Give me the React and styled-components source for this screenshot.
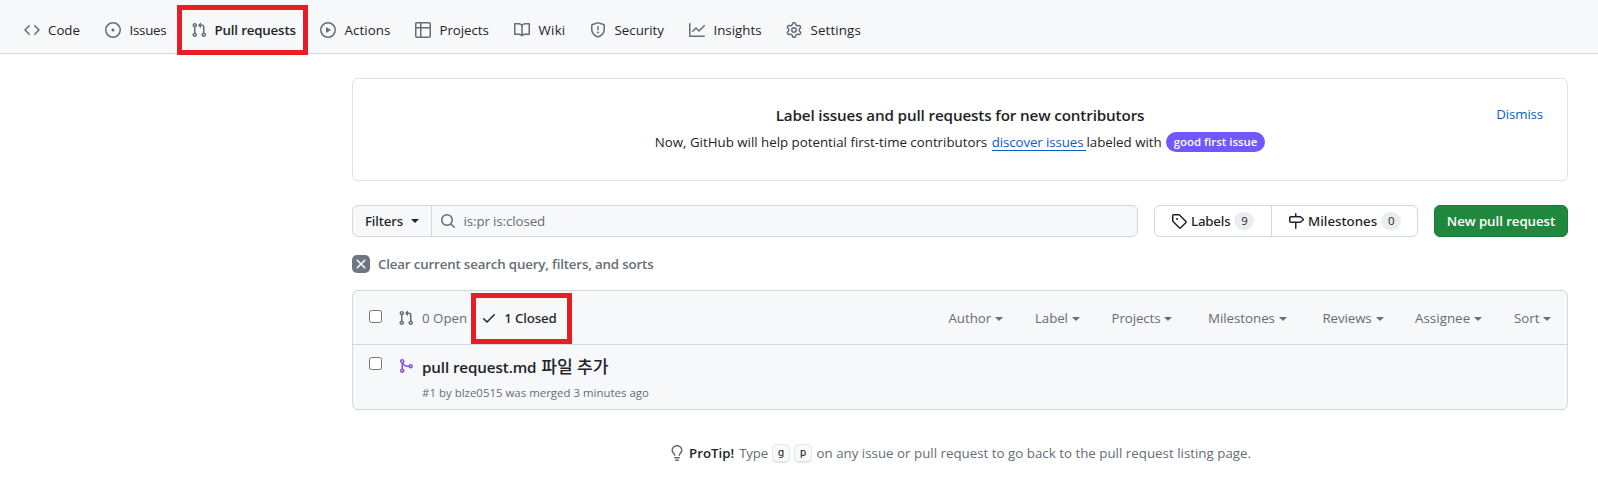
import React from "react";
import styled, { createGlobalStyle, css } from "styled-components";

const color = {
  fg: "#1f2328",
  muted: "#656d76",
  border: "#d0d7de",
  borderMuted: "#dfe4e9",
  subtle: "#f6f8fa",
  link: "#0a5fc2",
  green: "#1f883d",
  purple: "#7057ff",
  merged: "#8250df",
  mark: "#e81d25",
};

const GlobalStyle = createGlobalStyle`
  *, *::before, *::after { box-sizing: border-box; }
  body {
    margin: 0;
    background: #fff;
    color: ${color.fg};
    font-family: "Open Sans", "Noto Sans CJK KR", sans-serif;
    font-size: 13.3px;
    line-height: 20px;
    white-space: nowrap;
  }
`;

const paths = {
  code: "m11.28 3.22 4.25 4.25a.75.75 0 0 1 0 1.06l-4.25 4.25a.749.749 0 0 1-1.275-.326.749.749 0 0 1 .215-.734L13.94 8l-3.72-3.72a.749.749 0 0 1 .326-1.275.749.749 0 0 1 .734.215Zm-6.56 0a.751.751 0 0 1 1.042.018.751.751 0 0 1 .018 1.042L2.06 8l3.72 3.72a.749.749 0 0 1-.326 1.275.749.749 0 0 1-.734-.215L.47 8.53a.75.75 0 0 1 0-1.06Z",
  issue: "M8 9.5a1.5 1.5 0 1 0 0-3 1.5 1.5 0 0 0 0 3ZM8 0a8 8 0 1 1 0 16A8 8 0 0 1 8 0ZM1.5 8a6.5 6.5 0 1 0 13 0 6.5 6.5 0 0 0-13 0Z",
  pull: "M1.5 3.25a2.25 2.25 0 1 1 3 2.122v5.256a2.251 2.251 0 1 1-1.5 0V5.372A2.25 2.25 0 0 1 1.5 3.25Zm5.677-.177L9.573.677A.25.25 0 0 1 10 .854V2.5h1A2.5 2.5 0 0 1 13.5 5v5.628a2.251 2.251 0 1 1-1.5 0V5a1 1 0 0 0-1-1h-1v1.646a.25.25 0 0 1-.427.177L7.177 3.427a.25.25 0 0 1 0-.354ZM3.75 2.5a.75.75 0 1 0 0 1.5.75.75 0 0 0 0-1.5Zm0 9.5a.75.75 0 1 0 0 1.5.75.75 0 0 0 0-1.5Zm8.25.75a.75.75 0 1 0 1.5 0 .75.75 0 0 0-1.5 0Z",
  play: "M8 0a8 8 0 1 1 0 16A8 8 0 0 1 8 0ZM1.5 8a6.5 6.5 0 1 0 13 0 6.5 6.5 0 0 0-13 0Zm4.879-2.773 4.264 2.559a.25.25 0 0 1 0 .428l-4.264 2.559A.25.25 0 0 1 6 10.559V5.442a.25.25 0 0 1 .379-.215Z",
  table: "M0 1.75C0 .784.784 0 1.75 0h12.5C15.216 0 16 .784 16 1.75v12.5A1.75 1.75 0 0 1 14.25 16H1.75A1.75 1.75 0 0 1 0 14.25ZM6.5 6.5v8h7.75a.25.25 0 0 0 .25-.25V6.5Zm8-1.5V1.75a.25.25 0 0 0-.25-.25H6.5V5Zm-13 1.5v7.75c0 .138.112.25.25.25H5v-8ZM5 5V1.5H1.75a.25.25 0 0 0-.25.25V5Z",
  book: "M0 1.75A.75.75 0 0 1 .75 1h4.253c1.227 0 2.317.59 3 1.501A3.743 3.743 0 0 1 11.006 1h4.245a.75.75 0 0 1 .75.75v10.5a.75.75 0 0 1-.75.75h-4.507a2.25 2.25 0 0 0-1.591.659l-.622.621a.75.75 0 0 1-1.06 0l-.622-.621A2.25 2.25 0 0 0 5.258 13H.75a.75.75 0 0 1-.75-.75Zm7.251 10.324.004-5.073-.002-2.253A2.25 2.25 0 0 0 5.003 2.5H1.5v9h3.757a3.75 3.75 0 0 1 1.994.574ZM8.755 4.75l-.004 7.322a3.752 3.752 0 0 1 1.992-.572H14.5v-9h-3.495a2.25 2.25 0 0 0-2.25 2.25Z",
  shield: "M7.467.133a1.748 1.748 0 0 1 1.066 0l5.25 1.68A1.75 1.75 0 0 1 15 3.48V7c0 1.566-.32 3.182-1.303 4.682-.983 1.498-2.585 2.813-5.032 3.855a1.697 1.697 0 0 1-1.33 0c-2.447-1.042-4.049-2.357-5.032-3.855C1.32 10.182 1 8.566 1 7V3.48a1.75 1.75 0 0 1 1.217-1.667Zm.61 1.429a.25.25 0 0 0-.153 0l-5.25 1.68a.25.25 0 0 0-.174.238V7c0 1.358.275 2.666 1.057 3.86.784 1.194 2.121 2.34 4.366 3.297a.196.196 0 0 0 .154 0c2.245-.956 3.582-2.104 4.366-3.298C13.225 9.666 13.5 8.36 13.5 7V3.48a.251.251 0 0 0-.174-.237l-5.25-1.68ZM8.75 4.75v3a.75.75 0 0 1-1.5 0v-3a.75.75 0 0 1 1.5 0ZM9 10.5a1 1 0 1 1-2 0 1 1 0 0 1 2 0Z",
  graph: "M1.5 1.75V13.5h13.75a.75.75 0 0 1 0 1.5H.75a.75.75 0 0 1-.75-.75V1.75a.75.75 0 0 1 1.5 0Zm14.28 2.53-5.25 5.25a.75.75 0 0 1-1.06 0L7 7.06 4.28 9.78a.751.751 0 0 1-1.042-.018.751.751 0 0 1-.018-1.042l3.25-3.25a.75.75 0 0 1 1.06 0L10 7.94l4.72-4.72a.751.751 0 0 1 1.042.018.751.751 0 0 1 .018 1.042Z",
  gear: "M8 0a8.2 8.2 0 0 1 .701.031C9.444.095 9.99.645 10.16 1.29l.288 1.107c.018.066.079.158.212.224.231.114.454.243.668.386.123.082.233.09.299.071l1.103-.303c.644-.176 1.392.021 1.82.63.27.385.506.792.704 1.218.315.675.111 1.422-.364 1.891l-.814.806c-.049.048-.098.147-.088.294.016.257.016.515 0 .772-.01.147.038.246.088.294l.814.806c.475.469.679 1.216.364 1.891a7.977 7.977 0 0 1-.704 1.217c-.428.61-1.176.807-1.82.63l-1.102-.302c-.067-.019-.177-.011-.3.071a5.909 5.909 0 0 1-.668.386c-.133.066-.194.158-.211.224l-.29 1.106c-.168.646-.715 1.196-1.458 1.26a8.006 8.006 0 0 1-1.402 0c-.743-.064-1.289-.614-1.458-1.26l-.289-1.106c-.018-.066-.079-.158-.212-.224a5.738 5.738 0 0 1-.668-.386c-.123-.082-.233-.09-.299-.071l-1.103.303c-.644.176-1.392-.021-1.82-.63a8.12 8.12 0 0 1-.704-1.218c-.315-.675-.111-1.422.363-1.891l.815-.806c.05-.048.098-.147.088-.294a6.214 6.214 0 0 1 0-.772c.01-.147-.038-.246-.088-.294l-.815-.806C.635 6.045.431 5.298.746 4.623a7.92 7.92 0 0 1 .704-1.217c.428-.61 1.176-.807 1.82-.63l1.102.302c.067.019.177.011.3-.071.214-.143.437-.272.668-.386.133-.066.194-.158.211-.224l.29-1.106C6.009.645 6.556.095 7.299.03 7.53.01 7.764 0 8 0Zm-.571 1.525c-.036.003-.108.036-.137.146l-.289 1.105c-.147.561-.549.967-.998 1.189-.173.086-.34.183-.5.29-.417.278-.97.423-1.529.27l-1.103-.303c-.109-.03-.175.016-.195.045-.22.312-.412.644-.573.99-.014.031-.021.11.059.19l.815.806c.411.406.562.957.53 1.456a4.709 4.709 0 0 0 0 .582c.032.499-.119 1.05-.53 1.456l-.815.806c-.081.08-.073.159-.059.19.162.346.353.677.573.989.02.03.085.076.195.046l1.102-.303c.56-.153 1.113-.008 1.53.27.161.107.328.204.501.29.447.222.85.629.997 1.189l.289 1.105c.029.109.101.143.137.146a6.6 6.6 0 0 0 1.142 0c.036-.003.108-.036.137-.146l.289-1.105c.147-.561.549-.967.998-1.189.173-.086.34-.183.5-.29.417-.278.97-.423 1.529-.27l1.103.303c.109.029.175-.016.195-.045.22-.313.411-.644.573-.99.014-.031.021-.11-.059-.19l-.815-.806c-.411-.406-.562-.957-.53-1.456a4.709 4.709 0 0 0 0-.582c-.032-.499.119-1.05.53-1.456l.815-.806c.081-.08.073-.159.059-.19a6.464 6.464 0 0 0-.573-.989c-.02-.03-.085-.076-.195-.046l-1.102.303c-.56.153-1.113.008-1.53-.27a4.44 4.44 0 0 0-.501-.29c-.447-.222-.85-.629-.997-1.189l-.289-1.105c-.029-.11-.101-.143-.137-.146a6.6 6.6 0 0 0-1.142 0ZM11 8a3 3 0 1 1-6 0 3 3 0 0 1 6 0ZM9.5 8a1.5 1.5 0 1 0-3.001.001A1.5 1.5 0 0 0 9.5 8Z",
  search: "M10.68 11.74a6 6 0 0 1-7.922-8.982 6 6 0 0 1 8.982 7.922l3.04 3.04a.749.749 0 0 1-.326 1.275.749.749 0 0 1-.734-.215ZM11.5 7a4.499 4.499 0 1 0-8.997 0A4.499 4.499 0 0 0 11.5 7Z",
  tag: "M1 7.775V2.75C1 1.784 1.784 1 2.75 1h5.025c.464 0 .91.184 1.238.513l6.25 6.25a1.75 1.75 0 0 1 0 2.474l-5.026 5.026a1.75 1.75 0 0 1-2.474 0l-6.25-6.25A1.752 1.752 0 0 1 1 7.775Zm1.5 0c0 .066.026.13.073.177l6.25 6.25a.25.25 0 0 0 .354 0l5.025-5.025a.25.25 0 0 0 0-.354l-6.25-6.25a.25.25 0 0 0-.177-.073H2.75a.25.25 0 0 0-.25.25ZM6 5a1 1 0 1 1 0 2 1 1 0 0 1 0-2Z",
  milestone: "M7.75 0a.75.75 0 0 1 .75.75V3h3.634c.414 0 .814.147 1.13.414l2.07 1.75a1.75 1.75 0 0 1 0 2.672l-2.07 1.75a1.75 1.75 0 0 1-1.13.414H8.5v5.25a.75.75 0 0 1-1.5 0V10H2.75A1.75 1.75 0 0 1 1 8.25v-3.5C1 3.784 1.784 3 2.75 3H7V.75A.75.75 0 0 1 7.75 0Zm4.384 8.5a.25.25 0 0 0 .161-.06l2.07-1.75a.248.248 0 0 0 0-.38l-2.07-1.75a.25.25 0 0 0-.161-.06H2.75a.25.25 0 0 0-.25.25v3.5c0 .138.112.25.25.25h9.384Z",
  x: "M3.72 3.72a.75.75 0 0 1 1.06 0L8 6.94l3.22-3.22a.749.749 0 0 1 1.275.326.749.749 0 0 1-.215.734L9.06 8l3.22 3.22a.749.749 0 0 1-.326 1.275.749.749 0 0 1-.734-.215L8 9.06l-3.22 3.22a.751.751 0 0 1-1.042-.018.751.751 0 0 1-.018-1.042L6.94 8 3.72 4.78a.75.75 0 0 1 0-1.06Z",
  check: "M13.78 4.22a.75.75 0 0 1 0 1.06l-7.25 7.25a.75.75 0 0 1-1.06 0L2.22 9.28a.751.751 0 0 1 .018-1.042.751.751 0 0 1 1.042-.018L6 10.94l6.72-6.72a.75.75 0 0 1 1.06 0Z",
  merge: "M5.45 5.154A4.25 4.25 0 0 0 9.25 7.5h1.378a2.251 2.251 0 1 1 0 1.5H9.25A5.734 5.734 0 0 1 5 7.123v3.505a2.25 2.25 0 1 1-1.5 0V5.372a2.25 2.25 0 1 1 1.95-.218ZM4.25 13.5a.75.75 0 1 0 0-1.5.75.75 0 0 0 0 1.5Zm8.5-4.5a.75.75 0 1 0 0-1.5.75.75 0 0 0 0 1.5ZM5 3.25a.75.75 0 1 0 0 .005V3.25Z",
  bulb: "M8 1.5c-2.363 0-4 1.69-4 3.75 0 .984.424 1.625.984 2.304l.214.253c.223.264.47.556.673.848.284.411.537.896.621 1.49a.75.75 0 0 1-1.484.211c-.04-.282-.163-.547-.37-.847a8.456 8.456 0 0 0-.542-.68c-.084-.1-.173-.205-.268-.32C3.201 7.75 2.5 6.766 2.5 5.25 2.5 2.31 4.863 0 8 0s5.5 2.31 5.5 5.25c0 1.516-.701 2.5-1.328 3.259-.095.115-.184.22-.268.319-.207.245-.383.453-.541.681-.208.3-.33.565-.37.847a.751.751 0 0 1-1.485-.212c.084-.593.337-1.078.621-1.489.203-.292.45-.584.673-.848.075-.088.147-.173.213-.253.561-.679.985-1.32.985-2.304 0-2.06-1.637-3.75-4-3.75ZM5.75 12h4.5a.75.75 0 0 1 0 1.5h-4.5a.75.75 0 0 1 0-1.5ZM6 15.25a.75.75 0 0 1 .75-.75h2.5a.75.75 0 0 1 0 1.5h-2.5a.75.75 0 0 1-.75-.75Z",
};

const Svg = styled.svg`
  display: block;
  flex: none;
  width: 16px;
  height: 16px;
  fill: currentColor;
`;

const Icon = ({ name, className }) => (
  <Svg className={className} viewBox="0 0 16 16" aria-hidden="true">
    <path d={paths[name]} fillRule="evenodd" />
  </Svg>
);

const Label = styled.span`
  letter-spacing: ${(p) => p.$track || 0}px;
`;

const Caret = styled.span`
  flex: none;
  width: 0;
  height: 0;
  border: 4px solid transparent;
  border-top-color: currentColor;
  border-bottom: 0;
`;

const redFrame = css`
  position: relative;
  &::after {
    content: "";
    position: absolute;
    border: 5px solid ${color.mark};
  }
`;

/* Repository navigation */

const RepoNav = styled.nav`
  display: flex;
  align-items: center;
  height: 54px;
  padding: 6px 24px 0;
  background: ${color.subtle};
  border-bottom: 1px solid ${color.border};
`;

const NavItem = styled.a`
  display: flex;
  align-items: center;
  gap: 8.5px;
  flex: none;
  width: ${(p) => p.$width}px;
  height: 20px;
  color: ${color.fg};
  font-weight: ${(p) => (p.$current ? 600 : 400)};
  svg { color: ${color.muted}; }
  &:first-child { gap: 8px; }
  ${(p) =>
    p.$current &&
    css`
      ${redFrame}
      gap: 7.5px;
      &::after { inset: -15px 12px -15px -14px; }
    `}
`;

const navItems = [
  { icon: "code", text: "Code", width: 81 },
  { icon: "issue", text: "Issues", width: 86, track: -0.25 },
  { icon: "pull", text: "Pull requests", width: 129, track: -0.17, current: true },
  { icon: "play", text: "Actions", width: 95, track: 0.08 },
  { icon: "table", text: "Projects", width: 99, track: -0.05 },
  { icon: "book", text: "Wiki", width: 76, track: 0.25 },
  { icon: "shield", text: "Security", width: 99 },
  { icon: "graph", text: "Insights", width: 97 },
  { icon: "gear", text: "Settings", width: 80, track: 0.13 },
];

/* Page body */

const Main = styled.main`
  width: 1216px;
  margin: 24px 30px 0 352px;
`;

const Banner = styled.section`
  display: grid;
  grid-template-columns: 1fr auto 1fr;
  height: 103px;
  padding: 24px 24px 0;
  border: 1px solid ${color.borderMuted};
  border-radius: 6px;
`;

const BannerCopy = styled.div`
  grid-column: 2;
  display: flex;
  flex-direction: column;
  align-items: center;
`;

const BannerTitle = styled.h4`
  margin: 0;
  font-size: 15.2px;
  font-weight: 600;
  line-height: 24px;
  letter-spacing: -0.125px;
`;

const BannerText = styled.p`
  display: flex;
  align-items: center;
  height: 20px;
  margin: 5px 0 0;
  gap: 4px;
`;

const InlineLink = styled.a`
  height: 19px;
  padding-right: 3px;
  border-bottom: 1px solid currentColor;
  color: ${color.link};
  letter-spacing: -0.1px;
  line-height: 20px;
`;

const Linked = styled.span`
  display: flex;
  margin-left: 0.5px;
`;

const IssueBadge = styled.span`
  height: 20px;
  padding: 0 8px;
  border-radius: 10px;
  background: ${color.purple};
  color: #fff;
  font-size: 11.4px;
  font-weight: 600;
  line-height: 20px;
`;

const Dismiss = styled.a`
  justify-self: end;
  margin-top: 1px;
  color: ${color.link};
  letter-spacing: -0.15px;
`;

const Toolbar = styled.div`
  display: flex;
  height: 32px;
  margin-top: 24px;
`;

const SearchGroup = styled.div`
  display: flex;
  width: 786px;
  border: 1px solid ${color.border};
  border-radius: 6px;
  background: ${color.subtle};
`;

const mediumText = css`
  font-family: "Noto Sans", "Noto Sans CJK KR", sans-serif;
  font-weight: 500;
`;

const FiltersButton = styled.div`
  display: flex;
  align-items: center;
  gap: 8.5px;
  width: 79px;
  padding-left: 12px;
  border-right: 1px solid ${color.border};
  ${mediumText}
`;

const SearchField = styled.div`
  display: flex;
  align-items: center;
  gap: 8px;
  padding-left: 7.5px;
  color: ${color.muted};
`;

const LinkGroup = styled.div`
  display: flex;
  width: 264px;
  margin: 0 16px;
  border: 1px solid ${color.border};
  border-radius: 6px;
`;

const GroupLink = styled.a`
  display: flex;
  align-items: center;
  flex: none;
  width: 116px;
  padding-left: 16px;
  gap: 4px;
  ${mediumText}
  & + & {
    flex: 1;
    border-left: 1px solid ${color.border};
  }
`;

const Count = styled.span`
  min-width: 20px;
  height: 18px;
  padding: 0 6.5px;
  border-radius: 9px;
  background: #eaedf0;
  font-family: "Open Sans", sans-serif;
  font-size: 11.4px;
  font-weight: 500;
  line-height: 18px;
  text-align: center;
`;

const NewButton = styled.button`
  flex: 1;
  padding: 0;
  border: 1px solid #1c7a38;
  border-radius: 6px;
  background: ${color.green};
  color: #fff;
  font: inherit;
  font-weight: 600;
  letter-spacing: -0.07px;
`;

const ClearLink = styled.a`
  display: flex;
  align-items: center;
  gap: 8px;
  width: max-content;
  margin-top: 17px;
  color: ${color.muted};
  font-weight: 600;
`;

const ClearBox = styled.span`
  display: grid;
  place-items: center;
  width: 18px;
  height: 18px;
  border-radius: 5px;
  background: #6e7781;
  color: #fff;
`;

const List = styled.section`
  margin-top: 16px;
  border: 1px solid ${color.border};
  border-radius: 6px;
  background: ${color.subtle};
`;

const Checkbox = styled.span`
  flex: none;
  width: 13px;
  height: 13px;
  border: 1px solid #767676;
  border-radius: 2.5px;
  background: #fff;
`;

const ListHeader = styled.header`
  display: flex;
  align-items: center;
  height: 54px;
  padding: 0 16px;
  border-bottom: 1px solid ${color.border};
  color: ${color.muted};
  ${Checkbox} { margin: -3px 16px 0 0; }
`;

const StateLink = styled.a`
  display: flex;
  align-items: center;
  gap: 8px;
  ${(p) =>
    p.$current &&
    css`
      ${redFrame}
      margin-left: 14px;
      color: ${color.fg};
      gap: 7px;
      font-family: "Noto Sans", sans-serif;
      font-weight: 500;
      &::after { inset: -15px -15px -16px -10px; }
    `}
`;

const Menus = styled.div`
  display: flex;
  margin-left: auto;
`;

const Menu = styled.div`
  display: flex;
  align-items: center;
  gap: 4px;
  width: ${(p) => p.$width}px;
  ${Caret} { margin-top: 3px; }
`;

const menus = [
  ["Author", 86.5, -0.05],
  ["Label", 76.5, -0.1],
  ["Projects", 96.5, -0.1],
  ["Milestones", 114.5, -0.03],
  ["Reviews", 92.5, -0.1],
  ["Assignee", 99, 0.05],
  ["Sort", 37],
];

const Row = styled.article`
  display: flex;
  align-items: flex-start;
  height: 64px;
  padding: 0 16px;
  ${Checkbox} { margin: 12px 16px 0 0; }
  > svg { margin-top: 13px; color: ${color.merged}; }
`;

const RowBody = styled.div`
  display: flex;
  flex-direction: column;
  margin-left: 8px;
  padding-top: 10px;
`;

const RowTitle = styled.a`
  height: 24px;
  font-size: 15.2px;
  font-weight: 600;
  line-height: 24px;
  letter-spacing: -0.12px;
`;

const Korean = styled.span`
  margin-left: 1px;
  font-size: 17.2px;
  font-weight: 500;
  line-height: 20px;
`;

const RowMeta = styled.span`
  margin-top: 4px;
  color: ${color.muted};
  font-size: 11.4px;
  letter-spacing: 0.03px;
`;

const ProTip = styled.footer`
  display: flex;
  align-items: center;
  justify-content: center;
  height: 20px;
  margin-top: 33px;
  color: ${color.muted};
  strong { margin: 0 5px 0 4px; color: ${color.fg}; font-weight: 600; }
`;

const Key = styled.kbd`
  width: 18px;
  height: 19px;
  margin-left: 4px;
  border: 1px solid #e3e7eb;
  border-bottom-width: 2px;
  border-radius: 5px;
  background: ${color.subtle};
  color: ${color.fg};
  font: 11px/15px "DejaVu Sans Mono", monospace;
  text-align: center;
`;

const TipRest = styled.span`
  margin-left: 4.5px;
  letter-spacing: 0.015px;
`;

export default function App() {
  return (
    <>
      <GlobalStyle />
      <RepoNav>
        {navItems.map((item) => (
          <NavItem key={item.text} $width={item.width} $current={item.current}>
            <Icon name={item.icon} />
            <Label $track={item.track}>{item.text}</Label>
          </NavItem>
        ))}
      </RepoNav>
      <Main>
        <Banner>
          <BannerCopy>
            <BannerTitle>Label issues and pull requests for new contributors</BannerTitle>
            <BannerText>
              <span>Now, GitHub will help potential first-time contributors</span>
              <Linked>
                <InlineLink>discover issues</InlineLink>
                <span>labeled with</span>
              </Linked>
              <IssueBadge>good first issue</IssueBadge>
            </BannerText>
          </BannerCopy>
          <Dismiss>Dismiss</Dismiss>
        </Banner>

        <Toolbar>
          <SearchGroup>
            <FiltersButton>
              <Label $track={-0.15}>Filters</Label>
              <Caret />
            </FiltersButton>
            <SearchField>
              <Icon name="search" />
              <Label $track={-0.1}>is:pr is:closed</Label>
            </SearchField>
          </SearchGroup>
          <LinkGroup>
            <GroupLink>
              <Icon name="tag" />
              <Label $track={-0.2}>Labels</Label>
              <Count>9</Count>
            </GroupLink>
            <GroupLink>
              <Icon name="milestone" />
              <Label>Milestones</Label>
              <Count>0</Count>
            </GroupLink>
          </LinkGroup>
          <NewButton>New pull request</NewButton>
        </Toolbar>

        <ClearLink>
          <ClearBox>
            <Icon name="x" />
          </ClearBox>
          <Label $track={-0.16}>Clear current search query, filters, and sorts</Label>
        </ClearLink>

        <List>
          <ListHeader>
            <Checkbox />
            <StateLink>
              <Icon name="pull" />
              <Label>0 Open</Label>
            </StateLink>
            <StateLink $current>
              <Icon name="check" />
              <Label $track={-0.15}>1 Closed</Label>
            </StateLink>
            <Menus>
              {menus.map(([text, width, track]) => (
                <Menu key={text} $width={width}>
                  <Label $track={track}>{text}</Label>
                  <Caret />
                </Menu>
              ))}
            </Menus>
          </ListHeader>
          <Row>
            <Checkbox />
            <Icon name="merge" />
            <RowBody>
              <RowTitle>
                pull request.md <Korean>파일 추가</Korean>
              </RowTitle>
              <RowMeta>#1 by blze0515 was merged 3 minutes ago</RowMeta>
            </RowBody>
          </Row>
        </List>

        <ProTip>
          <Icon name="bulb" />
          <strong>ProTip!</strong>
          <Label $track={-0.2}>Type</Label>
          <Key>g</Key>
          <Key>p</Key>
          <TipRest>on any issue or pull request to go back to the pull request listing page.</TipRest>
        </ProTip>
      </Main>
    </>
  );
}
